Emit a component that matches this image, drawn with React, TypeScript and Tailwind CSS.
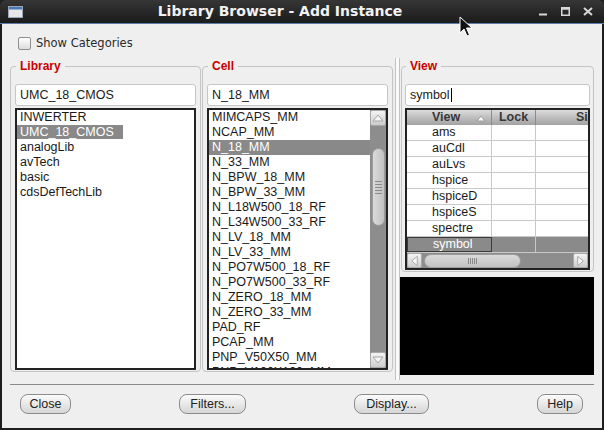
import React from "react";

const libs = ["INWERTER", "UMC_18_CMOS", "analogLib", "avTech", "basic", "cdsDefTechLib"];
const cells = [
  "MIMCAPS_MM",
  "NCAP_MM",
  "N_18_MM",
  "N_33_MM",
  "N_BPW_18_MM",
  "N_BPW_33_MM",
  "N_L18W500_18_RF",
  "N_L34W500_33_RF",
  "N_LV_18_MM",
  "N_LV_33_MM",
  "N_PO7W500_18_RF",
  "N_PO7W500_33_RF",
  "N_ZERO_18_MM",
  "N_ZERO_33_MM",
  "PAD_RF",
  "PCAP_MM",
  "PNP_V50X50_MM",
  "PNP_V100X100_MM",
];
const views = ["ams", "auCdl", "auLvs", "hspice", "hspiceD", "hspiceS", "spectre", "symbol"];

const ui = "font-['Liberation_Sans',Arial,sans-serif]";

function Tri({ dir }: { dir: "up" | "down" | "left" | "right" }) {
  const pts = {
    up: "2,10 7,4 12,10",
    down: "2,4 7,10 12,4",
    left: "10,2 4,7 10,12",
    right: "4,2 10,7 4,12",
  }[dir];
  return (
    <svg width="14" height="14" viewBox="0 0 14 14">
      <polygon points={pts} fill="#f6f6f6" stroke="#a4a4a4" strokeWidth="1" />
    </svg>
  );
}

function ScrollBtn({ dir, w = 16, h = 16 }: { dir: "up" | "down" | "left" | "right"; w?: number; h?: number }) {
  return (
    <div
      className="flex shrink-0 items-center justify-center rounded-[2px] border border-[#a8a8a8] bg-gradient-to-b from-[#f4f4f4] to-[#cdcdcd]"
      style={{ width: w, height: h }}
    >
      <Tri dir={dir} />
    </div>
  );
}

function Group({ title, className, children }: { title: string; className: string; children: React.ReactNode }) {
  return (
    <fieldset className={`min-w-0 rounded-[4px] border border-[#c4c4c4] pt-[11px] pb-[1px] ${className}`}>
      <legend className={`ml-[1px] px-[4px] text-[12px] font-bold leading-[14px] text-[#c80000] ${ui}`}>{title}</legend>
      {children}
    </fieldset>
  );
}

function Field({ value, caret }: { value: string; caret?: boolean }) {
  return (
    <div className={`flex h-[22px] items-center rounded-[3px] border border-[#c6c6c6] bg-white pl-[4px] text-[12.5px] text-[#1a1a1a] ${ui}`}>
      {value}
      {caret && <span className="ml-[1px] inline-block h-[14px] w-[1px] bg-black" />}
    </div>
  );
}

export default function App() {
  return (
    <div className="relative h-[430px] w-[604px] overflow-hidden bg-[#1e1e1e]">
      {/* title bar */}
      <div className="flex h-[24px] items-center rounded-t-[6px] border-b border-[#5d7ba8] bg-gradient-to-b from-[#363636] to-[#1b1b1b] pl-[8px] pr-[11px]">
        <svg width="15" height="12" viewBox="0 0 15 12">
          <rect x="0.5" y="0.5" width="14" height="11" fill="#e6e6e6" stroke="#9aa6b8" />
          <rect x="1" y="1" width="13" height="2.5" fill="#4a78b8" />
        </svg>
        <div className="flex-1 pr-[2px] text-center font-['DejaVu_Sans',sans-serif] text-[14px] font-bold text-[#f2f2f2]">
          Library Browser - Add Instance
        </div>
        <div className="flex items-center gap-[13px]">
          <svg width="9" height="9" viewBox="0 0 9 9">
            <rect x="0" y="6.5" width="8" height="2" fill="#d8d8d8" />
          </svg>
          <svg width="9" height="9" viewBox="0 0 9 9">
            <rect x="0.75" y="0.75" width="7.5" height="7.5" fill="none" stroke="#d8d8d8" strokeWidth="1.5" />
            <rect x="0.75" y="0.75" width="7.5" height="2" fill="#d8d8d8" />
          </svg>
          <svg width="10" height="9" viewBox="0 0 10 9">
            <path d="M1 1 L9 8 M9 1 L1 8" stroke="#d8d8d8" strokeWidth="2" />
          </svg>
        </div>
      </div>

      {/* body */}
      <div className="flex h-[406px] flex-col border-x-2 border-b-2 border-[#1e1e1e] bg-[#efefef]">
        <label className="ml-[16px] mt-[13px] flex h-[13px] items-center gap-[5px]">
          <span className="h-[13px] w-[13px] rounded-[2px] border border-[#8e8e8e] bg-gradient-to-b from-[#ffffff] to-[#dcdcdc]" />
          <span className="font-['DejaVu_Sans',sans-serif] text-[11.5px] text-[#2a2a2a]">Show Categories</span>
        </label>

        <div className="mt-[9px] flex h-[316px] items-start pl-[8px]">
          <Group title="Library" className="w-[191px] px-[4px]">
            <div className="flex flex-col gap-[2px]">
              <Field value="UMC_18_CMOS" />
              <div className={`h-[262px] overflow-hidden border-2 border-[#222] bg-white text-[12.5px] leading-[15px] text-[#1a1a1a] ${ui}`}>
                {libs.map((l) =>
                  l === "UMC_18_CMOS" ? (
                    <div key={l} className="h-[15px]">
                      <span className="inline-block h-[14px] w-[106px] bg-[#898989] pl-[3px] text-white">{l}</span>
                    </div>
                  ) : (
                    <div key={l} className="h-[15px] pl-[3px]">
                      {l}
                    </div>
                  )
                )}
              </div>
            </div>
          </Group>

          <Group title="Cell" className="ml-[1px] w-[191px] px-[4px]">
            <div className="flex flex-col gap-[2px]">
              <Field value="N_18_MM" />
              <div className="flex h-[262px] overflow-hidden border-2 border-[#222] bg-white">
                <div className={`flex-1 overflow-hidden text-[12.5px] leading-[15px] text-[#1a1a1a] ${ui}`}>
                  {cells.map((c) => (
                    <div
                      key={c}
                      className={`h-[15px] whitespace-nowrap pl-[3px] ${c === "N_18_MM" ? "bg-[#898989] text-white" : ""}`}
                    >
                      {c}
                    </div>
                  ))}
                </div>
                <div className="flex w-[16px] flex-col items-center bg-[#8d8d8d]">
                  <ScrollBtn dir="up" />
                  <div className="mt-[22px] flex h-[78px] w-[13px] flex-col items-center justify-center gap-[2px] rounded-full border border-[#9c9c9c] bg-gradient-to-r from-[#dadada] to-[#c2c2c2]">
                    {[0, 1, 2, 3, 4].map((i) => (
                      <span key={i} className="h-[1px] w-[7px] bg-[#8a8a8a]" />
                    ))}
                  </div>
                  <div className="flex-1" />
                  <ScrollBtn dir="down" />
                </div>
              </div>
            </div>
          </Group>

          <div className="ml-[1px] mt-[-1px] flex h-[322px] w-[7px] justify-center">
            <div className="w-[5px] border-x border-[#c2c2c2] bg-[#fafafa]" />
          </div>

          <div className="flex w-[193px] flex-col">
            <Group title="View" className="px-[3px]">
              <div className="flex flex-col gap-[2px]">
                <Field value="symbol" caret />
                <div className={`flex h-[162px] w-full flex-col overflow-hidden border-2 border-[#222] bg-white text-[12.5px] text-[#1a1a1a] ${ui}`}>
                  <div className="flex h-[15px] shrink-0 bg-gradient-to-b from-[#dcdcdc] to-[#a2a2a2] text-[12.5px] font-bold leading-[15px] text-[#383838]">
                    <div className="flex w-[85px] shrink-0 items-center border-r border-[#8a8a8a] pl-[25px]">
                      View
                      <span className="ml-auto mr-[5px]">
                        <svg width="10" height="8" viewBox="0 0 10 8">
                          <polygon points="1,7 5,2 9,7" fill="#ffffff" stroke="#9a9a9a" />
                        </svg>
                      </span>
                    </div>
                    <div className="w-[44px] shrink-0 border-r border-[#8a8a8a] text-center">Lock</div>
                    <div className="w-[105px] shrink-0 text-center">Size</div>
                  </div>
                  {views.map((v) => {
                    const sel = v === "symbol";
                    return (
                      <div
                        key={v}
                        className={`flex h-[16px] shrink-0 border-b border-[#c8c8c8] leading-[15px] ${sel ? "bg-[#8a8a8a] text-white" : ""}`}
                      >
                        <div className={`w-[85px] shrink-0 pl-[25px] ${sel ? "border border-[#3a3a3a] leading-[13px]" : "border-r border-[#c8c8c8]"}`}>
                          {v}
                        </div>
                        <div className="w-[44px] shrink-0 border-r border-[#c8c8c8]" />
                        <div className="w-[105px] shrink-0" />
                      </div>
                    );
                  })}
                  <div className="flex h-[15px] shrink-0 items-center bg-[#8d8d8d]">
                    <ScrollBtn dir="left" w={15} h={15} />
                    <div className="ml-[2px] flex h-[14px] w-[97px] items-center justify-center gap-[1px] rounded-full border border-[#9c9c9c] bg-gradient-to-b from-[#dadada] to-[#c2c2c2]">
                      {[0, 1, 2, 3, 4].map((i) => (
                        <span key={i} className="h-[6px] w-[1px] bg-[#8a8a8a]" />
                      ))}
                    </div>
                    <div className="flex-1" />
                    <ScrollBtn dir="right" w={15} h={15} />
                  </div>
                </div>
              </div>
            </Group>
            <div className="-ml-[1px] mt-[5px] h-[98px] w-[194px] bg-black" />
          </div>
        </div>

        <div className="mx-[8px] mt-[9px] h-[1px] bg-[#8a8a8a]" />

        <div className={`mt-[9px] flex items-center justify-between pl-[18px] pr-[19px] text-[12.5px] text-[#222] ${ui}`}>
          {[
            ["Close", "w-[51px]"],
            ["Filters...", "w-[67px]"],
            ["Display...", "w-[75px]"],
            ["Help", "w-[46px]"],
          ].map(([t, w]) => (
            <button
              key={t}
              className={`h-[20px] ${w} rounded-[8px] border border-[#8c8c8c] bg-gradient-to-b from-[#fbfbfb] to-[#d6d6d6] leading-[18px]`}
            >
              {t}
            </button>
          ))}
        </div>
      </div>

      {/* mouse pointer */}
      <svg className="absolute left-[459px] top-[16px]" width="14" height="22" viewBox="0 0 14 22">
        <path d="M1 1 L1 17 L5 13 L8 20 L10.5 19 L7.5 12 L13 12 Z" fill="#111" stroke="#fff" strokeWidth="1" />
      </svg>
    </div>
  );
}
